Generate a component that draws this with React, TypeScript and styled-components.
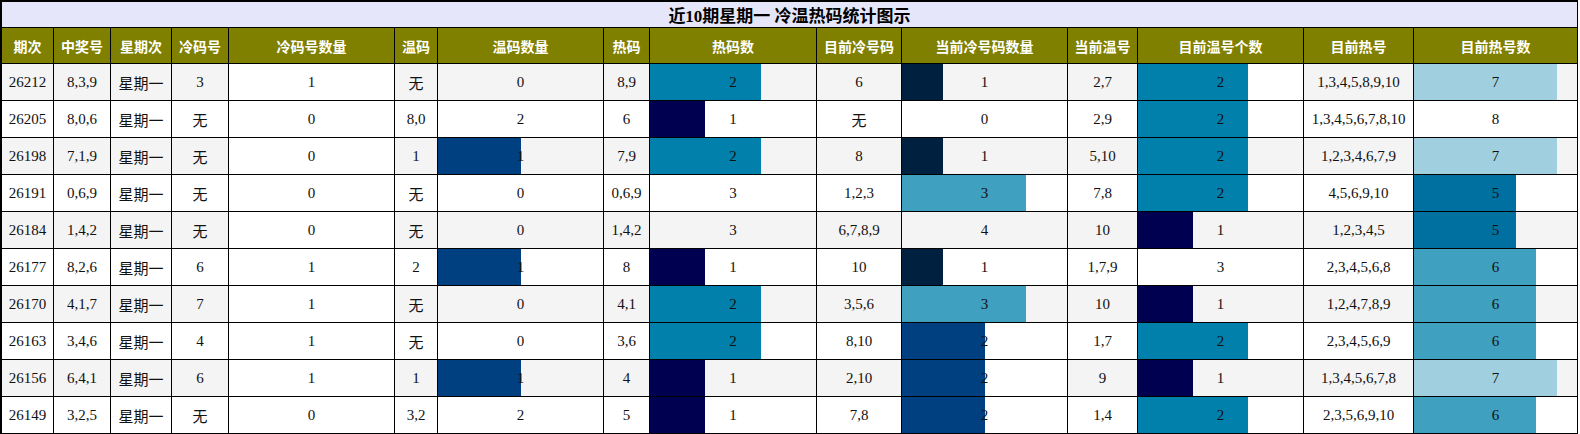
import React from "react";
import styled, { createGlobalStyle } from "styled-components";

const GlobalStyle = createGlobalStyle`
  html, body { margin: 0; padding: 0; background: #ffffff; }
  body { font-family: "Liberation Serif", "Noto Sans CJK SC", serif; }
`;

const COLS = [52, 57, 61, 57, 166, 43, 166, 46, 167, 85, 166, 70, 166, 110, 163];

const Frame = styled.div`
  width: 1578px;
  box-sizing: border-box;
  border: 2px solid #000;
  border-right-width: 1px;
  border-bottom-width: 1px;
`;

const Title = styled.div`
  height: 25px;
  border-bottom: 1px solid #000;
  background: #e6e6fa;
  display: flex;
  align-items: center;
  justify-content: center;
  font-family: "Liberation Serif", "Noto Sans CJK SC", serif;
  font-weight: 700;
  font-size: 17px;
  color: #000;
`;

const Row = styled.div<{ $h: number; $bg: string }>`
  display: grid;
  grid-template-columns: ${COLS.map((c) => c + "px").join(" ")};
  height: ${(p) => p.$h}px;
  background: ${(p) => p.$bg};
  border-bottom: 1px solid #000;
  &:last-child { border-bottom: none; }
`;

const HeadCell = styled.div`
  display: flex;
  align-items: center;
  justify-content: center;
  border-right: 1px solid #000;
  color: #fff;
  font-family: "Noto Sans CJK SC", sans-serif;
  font-weight: 700;
  font-size: 14px;
  &:last-child { border-right: none; }
`;

const Cell = styled.div<{ $bg?: string; $cjk?: boolean }>`
  position: relative;
  display: flex;
  align-items: center;
  justify-content: center;
  border-right: 1px solid #000;
  background: ${(p) => p.$bg ?? "transparent"};
  font-family: ${(p) =>
    p.$cjk ? '"Noto Sans CJK SC", sans-serif' : '"Liberation Serif", "Noto Sans CJK SC", serif'};
  font-size: 15px;
  color: #111;
  &:last-child { border-right: none; }
`;

const Bar = styled.div<{ $color: string }>`
  position: absolute;
  left: 0;
  top: 0;
  bottom: 0;
  background: ${(p) => p.$color};
`;

const Label = styled.span`
  position: relative;
`;

const HEADERS = [
  "期次", "中奖号", "星期次", "冷码号", "冷码号数量", "温码", "温码数量", "热码",
  "热码数", "目前冷号码", "当前冷号码数量", "当前温号", "目前温号个数", "目前热号", "目前热号数",
];

type R = (string | number)[];
const DATA: R[] = [
  ["26212", "8,3,9", "星期一", "3", 1, "无", 0, "8,9", 2, "6", 1, "2,7", 2, "1,3,4,5,8,9,10", 7],
  ["26205", "8,0,6", "星期一", "无", 0, "8,0", 2, "6", 1, "无", 0, "2,9", 2, "1,3,4,5,6,7,8,10", 8],
  ["26198", "7,1,9", "星期一", "无", 0, "1", 1, "7,9", 2, "8", 1, "5,10", 2, "1,2,3,4,6,7,9", 7],
  ["26191", "0,6,9", "星期一", "无", 0, "无", 0, "0,6,9", 3, "1,2,3", 3, "7,8", 2, "4,5,6,9,10", 5],
  ["26184", "1,4,2", "星期一", "无", 0, "无", 0, "1,4,2", 3, "6,7,8,9", 4, "10", 1, "1,2,3,4,5", 5],
  ["26177", "8,2,6", "星期一", "6", 1, "2", 1, "8", 1, "10", 1, "1,7,9", 3, "2,3,4,5,6,8", 6],
  ["26170", "4,1,7", "星期一", "7", 1, "无", 0, "4,1", 2, "3,5,6", 3, "10", 1, "1,2,4,7,8,9", 6],
  ["26163", "3,4,6", "星期一", "4", 1, "无", 0, "3,6", 2, "8,10", 2, "1,7", 2, "2,3,4,5,6,9", 6],
  ["26156", "6,4,1", "星期一", "6", 1, "1", 1, "4", 1, "2,10", 2, "9", 1, "1,3,4,5,6,7,8", 7],
  ["26149", "3,2,5", "星期一", "无", 0, "3,2", 2, "5", 1, "7,8", 2, "1,4", 2, "2,3,5,6,9,10", 6],
];

// bar columns and their maximum
const BAR_MAX: Record<number, number> = { 4: 1, 6: 2, 8: 3, 10: 4, 12: 3, 14: 8 };

// bar cells whose free part stays white on a shaded row
const WHITE_CELLS = new Set(["0-12", "8-10"]);

function barColor(r: number): string | null {
  if (r <= 0 || r >= 1) return null;
  if (r <= 0.26) return "#002040";
  if (r <= 0.34) return "#000050";
  if (r <= 0.51) return "#004080";
  if (r <= 0.63) return "#0070a0";
  if (r <= 0.67) return "#0080aa";
  if (r <= 0.76) return "#40a0c0";
  return "#a0d0e0";
}

export default function App() {
  return (
    <>
      <GlobalStyle />
      <Frame>
        <Title>近10期星期一 冷温热码统计图示</Title>
        <Row $h={35} $bg="#808000">
          {HEADERS.map((h) => (
            <HeadCell key={h}>{h}</HeadCell>
          ))}
        </Row>
        {DATA.map((row, ri) => (
          <Row key={ri} $h={36} $bg={ri % 2 === 0 ? "#f4f4f4" : "#ffffff"}>
            {row.map((v, ci) => {
              const max = BAR_MAX[ci];
              if (max !== undefined) {
                const r = (v as number) / max;
                const color = barColor(r);
                const white = ci === 4 || WHITE_CELLS.has(`${ri}-${ci}`);
                return (
                  <Cell key={ci} $bg={white ? "#ffffff" : undefined}>
                    {color && <Bar $color={color} style={{ width: `${r * 100}%` }} />}
                    <Label>{v}</Label>
                  </Cell>
                );
              }
              const s = String(v);
              const cjk = /[\u4e00-\u9fff]/.test(s);
              return (
                <Cell key={ci} $cjk={cjk}>
                  {s}
                </Cell>
              );
            })}
          </Row>
        ))}
      </Frame>
    </>
  );
}
